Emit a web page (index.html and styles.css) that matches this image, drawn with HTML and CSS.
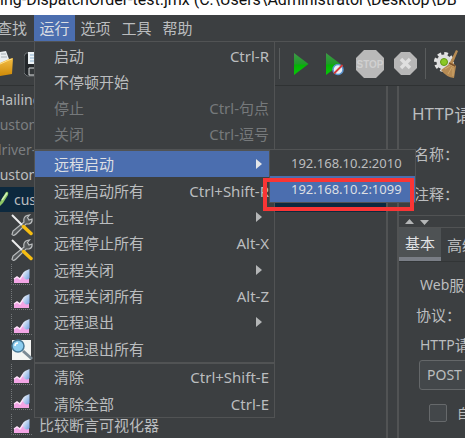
FILE: index.html
```html
<!DOCTYPE html>
<html lang="zh-CN">
<head>
<meta charset="utf-8">
<title>JMeter</title>
<link rel="stylesheet" href="styles.css">
</head>
<body>
<svg class="defs" aria-hidden="true">
  <defs>
    <linearGradient id="green" x1="0" y1="0" x2="0" y2="1"><stop offset="0" stop-color="#3f9a48"/><stop offset=".5" stop-color="#1f9a28"/><stop offset=".55" stop-color="#04b404"/><stop offset="1" stop-color="#08c808"/></linearGradient>
    <linearGradient id="gold" x1="0" y1="0" x2="0" y2="1"><stop offset="0" stop-color="#f3bd45"/><stop offset="1" stop-color="#cf8a06"/></linearGradient>
    <linearGradient id="drop" x1="0" y1="0" x2="1" y2="1"><stop offset="0" stop-color="#ffffff"/><stop offset="1" stop-color="#6f9ee0"/></linearGradient>
    <symbol id="tools" viewBox="0 0 22 22">
      <path d="M1 20.500 L2 17 L13 8 Q12 3 16 1.500 L18.500 1 L16.500 3.500 L18 6 L21 5 Q21.500 9 18 10 L15 10 L5 20 Q2.500 22.500 1 20.500Z" fill="#55595b" stroke="#b9bcbd" stroke-width="1.200"/>
      <path d="M1 1 L11 11" stroke="#eceded" stroke-width="2"/>
      <path d="M12.500 12.500 L20 19.500" stroke="#f5bd12" stroke-width="3.500" stroke-linecap="round"/>
    </symbol>
    <symbol id="chart" viewBox="0 0 22 22">
      <path d="M.5 0V20.500H21" fill="none" stroke="#74787a" stroke-dasharray="1 1"/>
      <path d="M3 19V15L6 13L9 15L13 9L18 13V19Z" fill="#f3a5e5"/>
      <path d="M3 15L6 13L9 15L13 9" fill="none" stroke="#ffe3fa" stroke-width="1.500"/>
      <path d="M18.500 5V14Q16 17 13 14Q10 10 14 7Z" fill="url(#drop)"/>
    </symbol>
  </defs>
</svg>
<div class="app">
  <header class="titlebar"><span>ing-DispatchOrder-test.jmx (C:\Users\Administrator\Desktop\DB</span></header>
  <nav class="menubar">
    <button class="top">查找</button>
    <div class="open">
      <button class="top active">运行</button>
      <div class="menu">
        <div class="group four">
          <button class="item">启动<kbd>Ctrl-R</kbd></button>
          <button class="item">不停顿开始</button>
          <button class="item" disabled>停止<kbd>Ctrl-句点</kbd></button>
          <button class="item" disabled>关闭<kbd>Ctrl-逗号</kbd></button>
        </div>
        <div class="group eight">
          <button class="item hot">远程启动<i class="arrow"></i></button>
          <button class="item">远程启动所有<kbd>Ctrl+Shift-R</kbd></button>
          <button class="item">远程停止<i class="arrow"></i></button>
          <button class="item">远程停止所有<kbd>Alt-X</kbd></button>
          <button class="item">远程关闭<i class="arrow"></i></button>
          <button class="item">远程关闭所有<kbd>Alt-Z</kbd></button>
          <button class="item">远程退出<i class="arrow"></i></button>
          <button class="item">远程退出所有</button>
        </div>
        <div class="group two">
          <button class="item">清除<kbd>Ctrl+Shift-E</kbd></button>
          <button class="item">清除全部<kbd>Ctrl-E</kbd></button>
        </div>
        <div class="submenu">
          <button class="host">192.168.10.2:2010</button>
          <button class="host hot">192.168.10.2:1099</button>
          <div class="marker"></div>
        </div>
      </div>
    </div>
    <button class="top">选项</button>
    <button class="top">工具</button>
    <button class="top">帮助</button>
  </nav>
  <div class="toolbar">
    <div class="files">
      <button class="tool" aria-label="打开"><svg width="14" height="28" viewBox="0 0 14 28"><path d="M0 2L6 1L9 9V18H0Z" fill="#e9edef"/><path d="M1 4H6M1 7H7" stroke="#a9b0b5"/><path d="M0 13L9 9L13 8L12 24L0 26Z" fill="url(#gold)"/><path d="M0 14L9 10L12 9" fill="none" stroke="#ffdf87"/></svg></button>
      <button class="tool" aria-label="保存"><svg width="20" height="28" viewBox="0 0 20 28"><path d="M2 3H19V26H3L0 23V6Z" fill="#24282b" stroke="#6d7275"/><path d="M4 2H18V14H4Z" fill="#edf3f6"/><path d="M6 5H18M6 8H18M6 11H18" stroke="#8db1cf"/><path d="M5 18H17V25H5Z" fill="#34383a" stroke="#dadcdd"/></svg></button>
    </div>
    <i class="rule"></i>
    <button class="tool play" aria-label="启动"><svg width="15" height="24" viewBox="0 0 15 24"><path d="M0 1L14.500 12L0 23Z" fill="url(#green)"/></svg></button>
    <button class="tool skip" aria-label="不停顿开始"><svg width="18" height="24" viewBox="0 0 18 24"><path d="M0 1L14.500 12L0 23Z" fill="url(#green)"/><circle cx="12" cy="17.500" r="5" fill="#e8f0f8" stroke="#5c94d0" stroke-width="1.500"/><path d="M8 21.500L16.500 13" stroke="#d33b3b" stroke-width="1.800"/></svg></button>
    <button class="tool stop" aria-label="停止"><svg width="28" height="28" viewBox="0 0 28 28"><path d="M8 0H20L28 8V20L20 28H8L0 20V8Z" fill="#b9b9b9"/><text x="14" y="18" text-anchor="middle" class="stopword">STOP</text></svg></button>
    <button class="tool close" aria-label="关闭"><svg width="23" height="23" viewBox="0 0 23 23"><path d="M7 0H16L23 7V16L16 23H7L0 16V7Z" fill="#b7b7b7"/><path d="M7 7L16 16M16 7L7 16" stroke="#dfdfdf" stroke-width="3.500"/></svg></button>
    <i class="rule"></i>
    <button class="tool clear" aria-label="清除"><svg width="26" height="28" viewBox="0 0 26 28"><circle cx="11" cy="12" r="8" fill="none" stroke="#e3e3e3" stroke-width="4" stroke-dasharray="3.500 2.780"/><circle cx="11" cy="12" r="7.500" fill="#dedede"/><circle cx="11" cy="12" r="3.500" fill="#8bc926" stroke="#619713"/><path d="M23 0L25 1L20 13L23 16L21 28Q13 27 8 20L15 15L17 12Z" fill="#b68b54"/><path d="M16 14L21 17M12 19L17 16M15 24L19 17M20 26L20 18" stroke="#d0a76a"/><path d="M16 13L22 16" stroke="#7c522c" stroke-width="1.500"/></svg></button>
  </div>
  <main class="work">
    <ul class="tree">
      <li class="root">Hailing</li>
      <li class="node off">customer</li>
      <li class="node off">driver-test</li>
      <li class="node">customer</li>
      <li class="picked"><svg width="10" height="20" viewBox="0 0 10 20"><path d="M0 12L6 2Q9 1 8 5L3 13L0 16Z" fill="#8cc665"/><path d="M2 10L7 3" stroke="#d3f2bb" stroke-width="1.500"/></svg><span>customer</span></li>
      <li class="leaf"><svg><use href="#tools"/></svg></li>
      <li class="leaf"><svg><use href="#tools"/></svg></li>
      <li class="leaf"><svg><use href="#chart"/></svg></li>
      <li class="leaf"><svg><use href="#chart"/></svg></li>
      <li class="leaf"><svg><use href="#chart"/></svg></li>
      <li class="leaf"><svg viewBox="0 0 22 22"><path d="M1 1H20V21H1Z" fill="#f4f5f3"/><path d="M12 12L21 20" stroke="#7b8a94" stroke-width="3"/><circle cx="7" cy="7" r="6" fill="#8ccdf0" stroke="#477896" stroke-width="1.500"/><path d="M4 7Q4 4 7 4" fill="none" stroke="#fff" stroke-width="1.500"/></svg></li>
      <li class="leaf"><svg><use href="#chart"/></svg></li>
      <li class="leaf"><svg><use href="#chart"/></svg></li>
      <li class="leaf"><svg><use href="#chart"/></svg><span>比较断言可视化器</span></li>
    </ul>
    <section class="editor">
      <h1><span>HTTP</span>请求</h1>
      <p class="field">名称：</p>
      <p class="field">注释：</p>
      <div class="fold"><svg width="25" height="8" viewBox="0 0 25 8"><path d="M0 6L4.500 1L9 6ZM15 2H24L19.500 7Z" fill="#b4b6b7"/></svg></div>
      <div class="tabs"><button class="tab current">基本</button><button class="tab">高级</button></div>
      <div class="form">
        <h2><span>Web</span>服务器</h2>
        <p>协议：</p>
        <h2><span>HTTP</span>请求</h2>
        <select class="method" aria-label="方法"><option>POST</option></select>
        <label class="check"><input type="checkbox">自动重定向</label>
      </div>
    </section>
  </main>
</div>
</body>
</html>
```

FILE: styles.css
```css
* { box-sizing: border-box; }
body {
  margin: 0;
  background: #3c3f41;
  color: #bbbdbf;
  font: 15px/20px "Noto Sans CJK SC", sans-serif;
  overflow: hidden;
}
button, select, input {
  font: inherit;
  color: inherit;
  margin: 0;
  padding: 0;
  border: 0;
  background: none;
  white-space: nowrap;
}
ul, h1, h2, p { margin: 0; padding: 0; font-weight: normal; white-space: nowrap; }
svg { display: block; }
.defs { position: absolute; width: 0; height: 0; }
.app { display: flex; flex-direction: column; height: 100vh; overflow: hidden; }

.titlebar {
  flex: 0 0 15px;
  display: flex;
  align-items: flex-end;
  background: #fff;
  color: #111;
  overflow: hidden;
  white-space: nowrap;
  font: 16px/30px Roboto, sans-serif;
}
.menubar {
  flex: 0 0 27px;
  display: flex;
  border-bottom: 1px solid #515354;
}
.top { width: 41px; height: 26px; }
.menubar > .top:first-child { width: 34px; text-align: left; text-indent: -3px; }
.open { position: relative; }
.active, .hot { background: #4b6eaf; color: #dcdfe3; }

.menu {
  position: absolute;
  z-index: 2;
  top: 26px;
  left: 0;
  width: 241px;
  padding-top: 1px;
  border: 1px solid #515354;
  background: #3c3f41;
}
.group { display: grid; grid-auto-rows: 1fr; }
.group + .group { border-top: 2px solid #515354; }
.four { height: 106px; padding-bottom: 2px; }
.eight { height: 213px; }
.two { height: 55px; }
.item {
  display: flex;
  align-items: center;
  justify-content: space-between;
  padding: 0 5px 0 19px;
  min-height: 0;
}
.item:disabled { color: #76797b; }
.host { font: 13px/20px "Noto Sans", sans-serif; }
kbd { font: 15px/20px "Noto Sans", "Noto Sans CJK SC", sans-serif; }
.node, .root, .picked, .method, h2 span { font: 14px/20px "Noto Sans", sans-serif; }
.arrow {
  border: solid transparent;
  border-width: 5px 0 5px 6px;
  border-left-color: #b4b6b7;
  margin-right: 7px;
}
.hot .arrow { border-left-color: #e4e6e8; }

.submenu {
  position: absolute;
  top: 107px;
  left: 234px;
  width: 147px;
  border: 1px solid #515354;
  background: #3c3f41;
}
.host { display: block; width: 100%; height: 26px; text-align: left; padding-left: 21px; }
.marker {
  position: absolute;
  top: 28px;
  left: -7px;
  width: 151px;
  height: 33px;
  border: 4px solid #f93535;
}

.toolbar {
  flex: 0 0 44px;
  display: flex;
  align-items: center;
  border-bottom: 1px solid #2f3233;
}
.tool { flex: none; }
.files { flex: 0 0 279px; display: flex; gap: 10px; }
.rule { flex: 0 0 1px; height: 31px; background: #595c5d; }
.play { margin-left: 14px; }
.skip { margin-left: 17px; }
.stop { margin-left: 12px; }
.close { margin: 0 8px 0 10px; }
.clear { margin-left: 7px; }
.stopword { font: bold 10px "Liberation Sans", sans-serif; fill: #d0d0d0; }

.work { flex: 1; display: flex; min-height: 0; }
.tree {
  flex: 0 0 388px;
  padding-top: 1px;
  border-right: 2px solid #515354;
  list-style: none;
  overflow: hidden;
}
.tree li { display: flex; align-items: center; height: 25px; white-space: nowrap; }
.tree .root { text-indent: -5px; }
.tree .node { text-indent: -7px; }
.tree .off { color: #7b7e80; }
.tree .picked { background: #0d293e; gap: 4px; }
.leaf { padding-left: 11px; gap: 6px; }
.leaf svg { width: 22px; height: 22px; }

.editor {
  flex: 1;
  min-width: 0;
  margin-left: 9px;
  border-left: 2px solid #515354;
  overflow: hidden;
}
h1, h2 { display: flex; align-items: center; height: 20px; }
h1 { margin: 18px 0 0 13px; font-size: 18px; line-height: 20px; }
h1 span { font: 17px/20px "Noto Sans", sans-serif; }
.field { margin: 20px 0 0 15px; }
.fold {
  margin-top: 11px;
  padding: 2px 0 1px 6px;
  border: solid #515354;
  border-width: 1px 0;
}
.tabs { display: flex; border-bottom: 1px solid #323536; }
.tab { flex: none; width: 42px; height: 33px; }
.current { background: #4e5254; border-bottom: 4px solid #7a7e86; color: #e0e2e4; }
.form { display: flex; flex-direction: column; align-items: flex-start; padding: 13px 0 0 17px; }
.form p { margin: 10px 0; }
h2 { font-size: 15px; line-height: 20px; margin-left: 4px; }
.method {
  appearance: none;
  width: 90px;
  height: 30px;
  margin: 5px 0 0 3px;
  padding-left: 7px;
  border: 1px solid #646769;
  border-radius: 3px;
  background: #43474a;
}
.check { display: flex; align-items: center; gap: 10px; margin: 13px 0 0 13px; font-size: 13px; white-space: nowrap; }
.check input {
  appearance: none;
  width: 18px;
  height: 18px;
  border: 1px solid #66696b;
  border-radius: 2px;
  background: #43474a;
}
```
